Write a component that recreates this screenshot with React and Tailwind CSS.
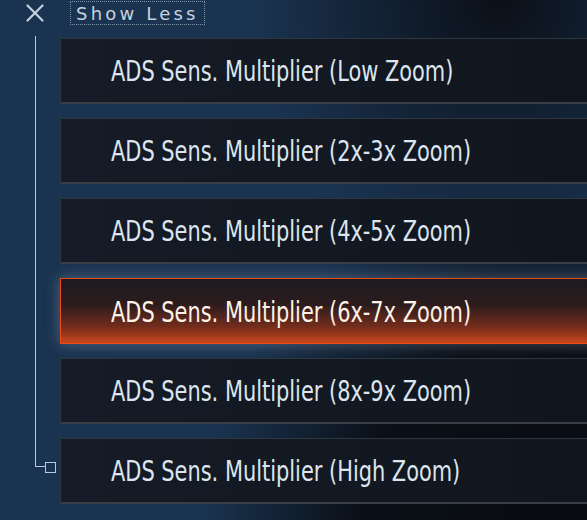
import React from "react";
import { X } from "lucide-react";

const items = [
  "ADS Sens. Multiplier (Low Zoom)",
  "ADS Sens. Multiplier (2x-3x Zoom)",
  "ADS Sens. Multiplier (4x-5x Zoom)",
  "ADS Sens. Multiplier (6x-7x Zoom)",
  "ADS Sens. Multiplier (8x-9x Zoom)",
  "ADS Sens. Multiplier (High Zoom)",
];

const condensed = {
  fontFamily: '"DejaVu Sans Condensed", "Liberation Sans Narrow", "Roboto", sans-serif',
};
const wide = {
  fontFamily: '"DejaVu Sans", "Roboto", sans-serif',
};

const Row = ({ label, active }) => {
  if (active) {
    return (
      <div className="h-[66px] flex items-center pl-[50px] pt-[3px] border border-[#f04a14] bg-[linear-gradient(to_bottom,#1b1a20_0%,#2c1c1e_40%,#742d1c_75%,#c8461a_100%)] shadow-[0_0_14px_rgba(190,200,215,0.35)]">
        <span className="inline-block origin-left scale-x-[0.83] whitespace-nowrap text-[28px] text-[#fff2e6]">
          {label}
        </span>
      </div>
    );
  }
  return (
    <div className="h-[66px] flex items-center pl-[50px] pt-[3px] border border-[#2e3640] border-b-2 border-b-[#3a3e45] bg-gradient-to-r from-[#151c27] to-[#10151d]">
      <span className="inline-block origin-left scale-x-[0.83] whitespace-nowrap text-[28px] text-[#dde5ee]">
        {label}
      </span>
    </div>
  );
};

export default function App() {
  return (
    <div
      className="w-[587px] h-[520px] overflow-hidden relative bg-[#1a3350]"
      style={condensed}
    >
      <div className="absolute inset-0 bg-[radial-gradient(ellipse_at_95%_100%,#080b10_0%,#0b1018_25%,transparent_45%)]" />
      <div className="absolute inset-0 bg-[radial-gradient(ellipse_at_85%_0%,#0b1018_0%,transparent_35%)]" />
      <div className="relative">
        <div className="h-[26px] flex items-center">
          <X className="ml-[20px] w-[30px] h-[30px] text-[#c3d0dc]" strokeWidth={1.8} />
          <span
            className="ml-[21px] px-[5px] h-[22px] flex items-center text-[18px] tracking-[3.2px] text-[#c5d2de] outline-1 outline-dotted outline-[#7f95a8]"
            style={wide}
          >
            Show Less
          </span>
        </div>
        <div className="flex mt-[12px]">
          <div className="w-[60px] shrink-0 relative">
            <div className="ml-[35px] -mt-[2px] w-[10px] h-[431px] border-l border-b border-[#b8cad9]" />
            <div className="absolute left-[45px] top-[424px] w-[11px] h-[11px] border border-[#b8cad9]" />
          </div>
          <div className="flex-1 flex flex-col gap-[14px] min-w-[540px]">
            {items.map((label, i) => (
              <Row key={label} label={label} active={i === 3} />
            ))}
          </div>
        </div>
      </div>
    </div>
  );
}
